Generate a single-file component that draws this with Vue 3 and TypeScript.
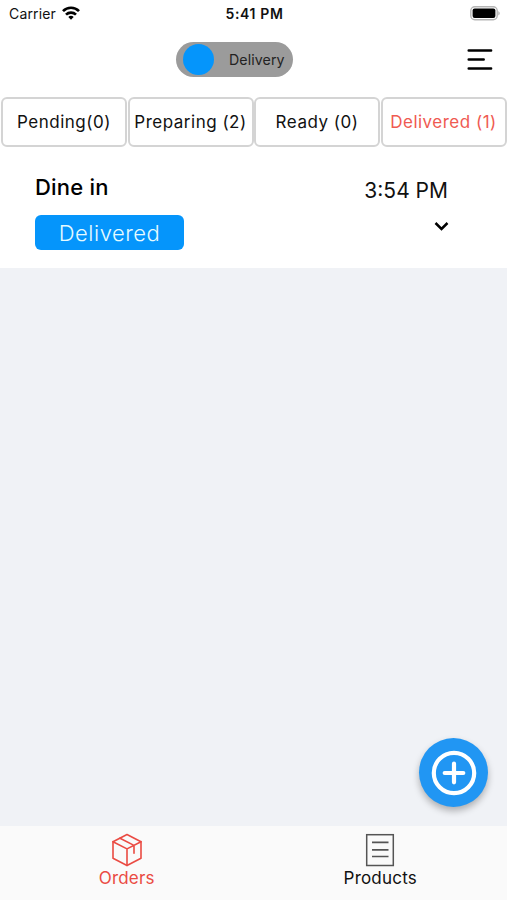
<script setup lang="ts">
import { ref } from 'vue'

interface Tab {
  id: string
  label: string
}

const tabs: Tab[] = [
  { id: 'pending', label: 'Pending(0)' },
  { id: 'preparing', label: 'Preparing (2)' },
  { id: 'ready', label: 'Ready (0)' },
  { id: 'delivered', label: 'Delivered (1)' },
]
const activeTab = ref('delivered')
</script>

<template>
  <div class="screen">
    <header class="status">
      <div class="carrier">
        <span class="carrier-name">Carrier</span>
        <svg class="wifi" width="18" height="14" viewBox="0 0 18 14" fill="none" stroke="#000" stroke-width="2.7">
          <path d="M1 5.1C5.5.6 12.5.6 17 5.1" />
          <path d="M4 8.6c2.8-2.7 7.2-2.7 10 0" />
          <path d="M6.3 10.9c1.5-1.4 3.9-1.4 5.4 0L9 13.7z" fill="#000" stroke="none" />
        </svg>
      </div>
      <span class="clock">5:41 PM</span>
      <svg class="battery" width="31" height="15" viewBox="0 0 31 15">
        <rect x=".8" y=".8" width="26.4" height="13" rx="4" fill="#fff" stroke="#b5b5b5" stroke-width="1.4" />
        <rect x="2.6" y="2.6" width="22.8" height="9.4" rx="2" fill="#000" />
        <path d="M28.4 5q2.6 2.3 0 4.6z" fill="#aaa" />
      </svg>
    </header>

    <div class="topbar">
      <button class="toggle" type="button">
        <span class="knob"></span>
        <span class="toggle-text">Delivery</span>
      </button>
      <svg class="menu" width="26" height="24" viewBox="0 0 26 24" stroke="#000" stroke-width="2.5" stroke-linecap="round">
        <path d="M1.7 2.4h22.4M1.7 11.5h15M1.7 20.6h22.4" />
      </svg>
    </div>

    <nav class="tabs">
      <button
        v-for="tab in tabs"
        :key="tab.id"
        type="button"
        :class="['tab', { active: tab.id === activeTab }]"
        @click="activeTab = tab.id"
      ><span>{{ tab.label }}</span></button>
    </nav>

    <section class="order">
      <div class="order-left">
        <h2 class="order-type">Dine in</h2>
        <span class="badge">Delivered</span>
      </div>
      <div class="order-right">
        <span class="time">3:54 PM</span>
        <svg class="chevron" width="15" height="11" viewBox="0 0 15 11" fill="none" stroke="#000" stroke-width="2.5">
          <path d="M1.5 2l6 5.9 6-5.9" />
        </svg>
      </div>
    </section>

    <main class="content">
      <button class="fab" type="button" aria-label="Add">
        <svg width="46" height="46" viewBox="0 0 46 46" fill="none" stroke="#fff" stroke-width="4.2" stroke-linecap="round">
          <circle cx="23" cy="23" r="20.2" />
          <path d="M23 13.7v18.6M13.7 23h18.6" />
        </svg>
      </button>
    </main>

    <footer class="bottom">
      <div class="nav orders">
        <svg width="32" height="34" viewBox="0 0 32 34" fill="none" stroke="#ea4b43" stroke-width="1.6" stroke-linejoin="round" stroke-linecap="round">
          <path d="M16 1.5l14 7.2v16.6L16 32.5 2 25.3V8.7z" />
          <path d="M2 8.7l14 7.2 14-7.2M16 15.9v16.6M9 5.2l14 7.2v7.8" />
        </svg>
        <span>Orders</span>
      </div>
      <div class="nav products">
        <svg width="32" height="34" viewBox="0 0 32 34" fill="none" stroke="#555" stroke-width="1.5">
          <rect x="2.7" y="1.7" width="26.6" height="30.8" />
          <path d="M8 9.4h16.5M8 16.9h16.5M8 23.5h16.5" stroke-width="1.7" />
        </svg>
        <span>Products</span>
      </div>
    </footer>
  </div>
</template>

<style>
body {
  margin: 0;
}
</style>

<style scoped>
.screen {
  width: 507px;
  height: 900px;
  display: flex;
  flex-direction: column;
  overflow: hidden;
  background: #fff;
  color: #111;
  font-family: Inter, "Liberation Sans", sans-serif;
}
button {
  border: 0;
  padding: 0;
  margin: 0;
  font: inherit;
  color: inherit;
}
svg {
  display: block;
  flex: none;
}
.status {
  height: 28px;
  display: grid;
  grid-template-columns: 1fr auto 1fr;
  align-items: center;
  padding: 0 6px 0 8px;
  box-sizing: border-box;
}
.carrier {
  display: flex;
  align-items: center;
  gap: 6px;
}
.carrier-name {
  padding-left: 1px;
  font-size: 14px;
  line-height: 20px;
  letter-spacing: 0.15px;
}
.wifi {
  margin-bottom: 2px;
}
.clock {
  font-size: 14px;
  font-weight: 600;
  line-height: 20px;
  letter-spacing: 0.65px;
}
.battery {
  justify-self: end;
  margin-bottom: 2px;
}
.topbar {
  height: 69px;
  display: flex;
  align-items: flex-start;
  justify-content: space-between;
  padding: 14px 14px 0 176px;
  box-sizing: border-box;
}
.toggle {
  width: 117px;
  height: 35px;
  display: flex;
  align-items: center;
  padding-left: 7px;
  border-radius: 18px;
  background: #9b9b9b;
}
.knob {
  width: 31px;
  height: 31px;
  border-radius: 50%;
  background: #0595fb;
}
.toggle-text {
  margin: 1px 0 0 15px;
  font-size: 14.2px;
  line-height: 20px;
  letter-spacing: 0.1px;
  color: #222;
}
.menu {
  margin-top: 6px;
}
.tabs {
  display: grid;
  grid-template-columns: repeat(4, 126px);
  gap: 0.5px;
  padding-left: 1px;
}
.tab {
  height: 50px;
  box-sizing: border-box;
  border: 2px solid #d4d4d4;
  border-radius: 6px;
  background: #fff;
  font-size: 17px;
  letter-spacing: 0.5px;
  white-space: nowrap;
}
.tab.active {
  color: #ef5a52;
}
.order {
  height: 121px;
  display: flex;
  justify-content: space-between;
  padding: 25px 59px 0 35px;
  box-sizing: border-box;
}
.order-left {
  display: flex;
  flex-direction: column;
}
.order-type {
  margin: 0;
  font-size: 22px;
  font-weight: 550;
  line-height: 30px;
  letter-spacing: 0.2px;
  color: #000;
}
.badge {
  width: 149px;
  height: 35px;
  margin-top: 13px;
  border-radius: 6px;
  background: #0595fb;
  color: #e6fbff;
  font-size: 22px;
  font-weight: 350;
  line-height: 36px;
  letter-spacing: 0.5px;
  text-align: center;
}
.order-right {
  display: flex;
  flex-direction: column;
  align-items: flex-end;
}
.time {
  margin-top: 4px;
  font-size: 21px;
  line-height: 30px;
}
.chevron {
  margin: 15px -1px 0 0;
}
.content {
  flex: 1;
  display: flex;
  align-items: flex-end;
  justify-content: flex-end;
  padding: 0 19px 19px 0;
  background: #f0f2f6;
}
.fab {
  width: 69px;
  height: 69px;
  display: flex;
  align-items: center;
  justify-content: center;
  border-radius: 50%;
  background: #2196f3;
  box-shadow: 0 4px 7px rgba(0, 0, 0, 0.28);
}
.bottom {
  height: 74px;
  display: grid;
  grid-template-columns: 1fr 1fr;
  background: #fafafa;
}
.nav {
  display: flex;
  flex-direction: column;
  align-items: center;
  padding-top: 7px;
  font-size: 17px;
  line-height: 23px;
  letter-spacing: 0.2px;
}
.orders {
  color: #ea4b43;
}
</style>
